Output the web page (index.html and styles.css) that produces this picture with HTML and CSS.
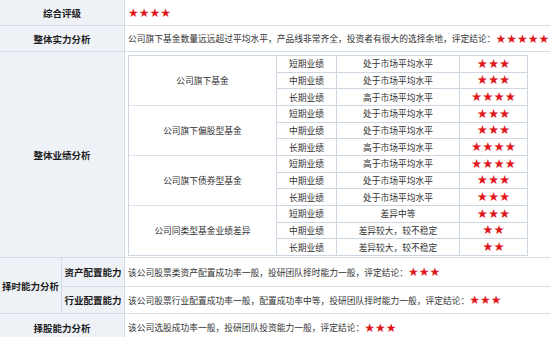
FILE: index.html
```html
<!DOCTYPE html>
<html lang="zh-CN">
<head>
<meta charset="utf-8">
<title>基金公司评级</title>
<link rel="stylesheet" href="styles.css">
</head>
<body>
<div class="sheet">
  <div class="lab span2">综合评级</div>
  <div class="val"><span class="stars">★★★★</span></div>

  <div class="lab span2">整体实力分析</div>
  <div class="val">公司旗下基金数量远远超过平均水平，产品线非常齐全，投资者有很大的选择余地，评定结论：<span class="stars">★★★★★</span></div>

  <div class="lab span2">整体业绩分析</div>
  <div class="val perf">
    <div class="perf-grid">
      <div class="grp">公司旗下基金</div>
      <div class="c">短期业绩</div><div class="c">处于市场平均水平</div><div class="c st"><span class="stars">★★★</span></div>
      <div class="c">中期业绩</div><div class="c">处于市场平均水平</div><div class="c st"><span class="stars">★★★</span></div>
      <div class="c">长期业绩</div><div class="c">高于市场平均水平</div><div class="c st"><span class="stars">★★★★</span></div>

      <div class="grp">公司旗下偏股型基金</div>
      <div class="c">短期业绩</div><div class="c">处于市场平均水平</div><div class="c st"><span class="stars">★★★</span></div>
      <div class="c">中期业绩</div><div class="c">处于市场平均水平</div><div class="c st"><span class="stars">★★★</span></div>
      <div class="c">长期业绩</div><div class="c">高于市场平均水平</div><div class="c st"><span class="stars">★★★★</span></div>

      <div class="grp">公司旗下债券型基金</div>
      <div class="c">短期业绩</div><div class="c">高于市场平均水平</div><div class="c st"><span class="stars">★★★★</span></div>
      <div class="c">中期业绩</div><div class="c">处于市场平均水平</div><div class="c st"><span class="stars">★★★</span></div>
      <div class="c">长期业绩</div><div class="c">处于市场平均水平</div><div class="c st"><span class="stars">★★★</span></div>

      <div class="grp last">公司同类型基金业绩差异</div>
      <div class="c">短期业绩</div><div class="c">差异中等</div><div class="c st"><span class="stars">★★★</span></div>
      <div class="c">中期业绩</div><div class="c">差异较大，较不稳定</div><div class="c st"><span class="stars">★★</span></div>
      <div class="c last">长期业绩</div><div class="c last">差异较大，较不稳定</div><div class="c st last"><span class="stars">★★</span></div>
    </div>
  </div>

  <div class="lab rspan2">择时能力分析</div>
  <div class="lab sub">资产配置能力</div>
  <div class="val">该公司股票类资产配置成功率一般，投研团队择时能力一般，评定结论：<span class="stars">★★★</span></div>
  <div class="lab sub">行业配置能力</div>
  <div class="val">该公司股票行业配置成功率一般，配置成功率中等，投研团队择时能力一般，评定结论：<span class="stars">★★★</span></div>

  <div class="lab span2">择股能力分析</div>
  <div class="val">该公司选股成功率一般，投研团队投资能力一般，评定结论：<span class="stars">★★★</span></div>
</div>
</body>
</html>
```

FILE: styles.css
```css
* { box-sizing: border-box; }

html, body {
  margin: 0;
  padding: 0;
  background: #ffffff;
}

body {
  font-family: "Noto Sans CJK SC", "Noto Sans", sans-serif;
  font-size: 8.75px;
  color: #333333;
  overflow: hidden;
}

.sheet {
  display: grid;
  grid-template-columns: 62px 63px 425px;
  grid-template-rows: 26px 26px 206px 29px 27px 28px;
  width: 550px;
}

.lab {
  display: flex;
  align-items: center;
  justify-content: center;
  background: #eef2f7;
  border-right: 1px solid #d3dbe5;
  border-bottom: 1px solid #d3dbe5;
  font-weight: bold;
  font-size: 9.5px;
  color: #1a1a1a;
  white-space: nowrap;
}

.span2 { grid-column: 1 / 3; }
.rspan2 { grid-row: span 2; }

.val {
  display: flex;
  align-items: center;
  padding-left: 3px;
  border-bottom: 1px solid #d3dbe5;
  white-space: nowrap;
}

.stars {
  font-family: "DejaVu Sans", sans-serif;
  font-size: 12px;
  color: #e0161b;
  line-height: 1;
}

.perf {
  align-items: flex-start;
  padding-top: 3px;
}

.perf-grid {
  display: grid;
  grid-template-columns: 148px 60px 123px 68px;
  grid-template-rows: repeat(12, 1fr);
  height: 201px;
  width: 400px;
  border-top: 1px solid #cdd6e1;
  border-left: 1px solid #cdd6e1;
}

.grp {
  grid-column: 1;
  grid-row: span 3;
  display: flex;
  align-items: center;
  justify-content: center;
  border-right: 1px solid #cdd6e1;
  border-bottom: 1px solid #dde2e8;
}

.c {
  display: flex;
  align-items: center;
  justify-content: center;
  border-right: 1px solid #cdd6e1;
  border-bottom: 1px solid #cdd6e1;
}

.grp.last, .c.last { border-bottom-color: #cdd6e1; }

.st .stars { font-size: 12.5px; }
```
